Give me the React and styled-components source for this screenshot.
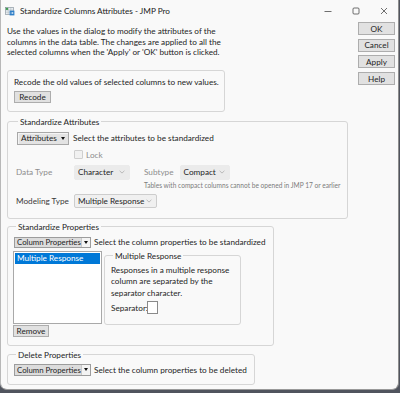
import React from "react";
import styled, { createGlobalStyle } from "styled-components";

const FONT = `Lato, "Noto Sans", "Liberation Sans", sans-serif`;

const GlobalStyle = createGlobalStyle`
  html, body { margin: 0; padding: 0; }
  body {
    width: 400px;
    height: 393px;
    overflow: hidden;
    background: #50545e;
    font-family: ${FONT};
  }
`;

const Window = styled.div`
  width: 399px;
  height: 390px;
  box-sizing: border-box;
  background: #f9f9f9;
  border-left: 1px solid #b8b8b8;
  border-right: 1px solid #8e8e8e;
  border-bottom: 1px solid #9a9a9a;
  border-radius: 0 0 7px 7px;
  display: flex;
  flex-direction: column;
  color: #1e1e1e;
  font-size: 8.2px;
`;

const TitleBar = styled.div`
  height: 21px;
  display: flex;
  align-items: center;
  padding-left: 4px;
`;

const Title = styled.span`
  margin-left: 5px;
  font-size: 8.2px;
  color: #1b1b1b;
`;

const WinControls = styled.div`
  margin-left: auto;
  display: flex;
  align-self: stretch;
`;

const WinControl = styled.div`
  width: 28px;
  display: flex;
  align-items: center;
  justify-content: center;
`;

const Body = styled.div`
  display: flex;
  justify-content: space-between;
  padding: 0 3px 0 6px;
`;

const Main = styled.div`
  display: flex;
  flex-direction: column;
  align-items: flex-start;
  padding-top: 5px;
`;

const Side = styled.div`
  display: flex;
  flex-direction: column;
  gap: 3.7px;
  padding-top: 1px;
`;

const Button = styled.div`
  box-sizing: border-box;
  width: ${(p) => p.$w || 37}px;
  height: ${(p) => p.$h || 13}px;
  background: #e1e1e1;
  border: 1px solid #adadad;
  display: flex;
  align-items: center;
  justify-content: center;
  color: #1e1e1e;
  font-size: 8.2px;
`;

const Intro = styled.p`
  margin: 0;
  line-height: 10.7px;
  white-space: nowrap;
`;

const Box = styled.div`
  box-sizing: border-box;
  width: 218px;
  height: 42px;
  margin-top: 11.5px;
  border: 1px solid #d6d6d6;
  border-radius: 3px;
  padding: 6px 6px 0;
  display: flex;
  flex-direction: column;
  align-items: flex-start;
  gap: 4px;
  line-height: 10px;
  white-space: nowrap;
`;

const Group = styled.fieldset`
  box-sizing: border-box;
  width: ${(p) => p.$w}px;
  margin: ${(p) => p.$mt}px 0 0;
  padding: ${(p) => p.$pad};
  border: 1px solid #d6d6d6;
  border-radius: 3px;
  min-width: 0;
  white-space: nowrap;
`;

const Legend = styled.legend`
  padding: 0 2px;
  margin-left: 2px;
  font-size: 8.2px;
  line-height: 10px;
  color: #1e1e1e;
`;

const AttrGrid = styled.div`
  display: grid;
  grid-template-columns: 58px auto;
  row-gap: 5px;
  align-items: center;
`;

const Wide = styled.div`
  grid-column: 1 / span 2;
  display: flex;
  align-items: center;
  gap: 4px;
  margin-left: 1px;
`;

const Row = styled.div`
  display: flex;
  align-items: ${(p) => p.$align || "center"};
  gap: ${(p) => p.$gap || 0}px;
`;

const MenuButton = styled(Button)`
  gap: 4px;
  background: #e3e3e3;
  border-color: #a8a8a8;
  box-shadow: inset 1px 1px 0 #f4f4f4;
`;

const Caret = styled.span`
  width: 0;
  height: 0;
  border-left: 2.5px solid transparent;
  border-right: 2.5px solid transparent;
  border-top: 3px solid #111;
`;

const FieldLabel = styled.span`
  color: ${(p) => (p.$muted ? "#8d8d8d" : "#3a3a3a")};
  line-height: 10px;
`;

const CheckBox = styled.span`
  box-sizing: border-box;
  width: 9px;
  height: 9px;
  border: 1px solid #cfcfcf;
  background: #f1f1f1;
  border-radius: 1px;
`;

const Combo = styled.div`
  box-sizing: border-box;
  width: ${(p) => p.$w}px;
  height: ${(p) => p.$h || 15}px;
  background: ${(p) => (p.$bordered ? "#f0f0f0" : "#ebebeb")};
  border: 1px solid ${(p) => (p.$bordered ? "#cdcdcd" : "#ebebeb")};
  border-radius: 2px;
  display: flex;
  align-items: center;
  justify-content: space-between;
  padding: 0 4px 0 3px;
  color: #1e1e1e;
`;

const Chevron = () => (
  <svg width="6" height="4" viewBox="0 0 6 4">
    <path d="M0.6 0.8 L3 3.1 L5.4 0.8" fill="none" stroke="#a5a5a5" strokeWidth="0.7" />
  </svg>
);

const SubCol = styled.div`
  display: flex;
  flex-direction: column;
  margin-left: 14px;
  gap: 1px;
`;

const Note = styled.span`
  font-size: 6.6px;
  line-height: 8px;
  color: #7c7c7c;
  white-space: nowrap;
`;

const PropsButton = styled.div`
  box-sizing: border-box;
  width: 77px;
  height: ${(p) => p.$h || 11}px;
  background: #dcdcdc;
  border: 1px solid #9c9c9c;
  display: flex;
  align-items: center;
  padding-left: 2px;
  color: #1e1e1e;
  font-size: 7.8px;
`;

const ArrowBox = styled.span`
  margin-left: auto;
  width: 8px;
  align-self: stretch;
  background: #f3f3f3;
  border-left: 1px solid #c9c9c9;
  display: flex;
  align-items: center;
  justify-content: center;
`;

const ListCol = styled.div`
  display: flex;
  flex-direction: column;
  align-items: flex-start;
  gap: 1px;
  margin-left: -1px;
`;

const ListBox = styled.div`
  box-sizing: border-box;
  width: 89px;
  height: 73px;
  background: #fff;
  border: 1px solid #a9a9a9;
  padding: 1px;
`;

const ListItem = styled.div`
  height: 11px;
  line-height: 11px;
  padding-left: 2px;
  background: ${(p) => (p.$selected ? "#0078d7" : "transparent")};
  color: ${(p) => (p.$selected ? "#fff" : "#1e1e1e")};
`;

const Para = styled.p`
  margin: 0;
  line-height: 11.5px;
  white-space: nowrap;
`;

const SepInput = styled.span`
  box-sizing: border-box;
  width: 11px;
  height: 13px;
  background: #fff;
  border: 1px solid #8a8a8a;
  margin-left: -1px;
`;

const AppIcon = () => (
  <svg width="10" height="10" viewBox="0 0 10 10">
    <rect x="0.5" y="1.5" width="8" height="7" fill="#e9eef2" stroke="#7d8a94" strokeWidth="0.6" />
    <path d="M0.5 4 H8.5 M0.5 6.2 H8.5 M3.2 1.5 V8.5 M5.8 1.5 V8.5" stroke="#9aa6ae" strokeWidth="0.4" />
    <rect x="0.8" y="1.8" width="2.3" height="2.1" fill="#3e9b4f" />
    <path d="M4.6 4.6 L9.4 4.6 L9.4 9.4 L4.6 9.4 Z" fill="#2f7fc8" />
    <path d="M5.6 7 H8.2 M7.2 6 L8.2 7 L7.2 8" fill="none" stroke="#fff" strokeWidth="0.6" />
  </svg>
);

const Minimize = () => (
  <svg width="8" height="8" viewBox="0 0 8 8">
    <path d="M0.5 4.5 H7.5" stroke="#333" strokeWidth="0.7" />
  </svg>
);

const Maximize = () => (
  <svg width="8" height="8" viewBox="0 0 8 8">
    <rect x="1" y="1" width="6" height="6" rx="1" fill="none" stroke="#333" strokeWidth="0.7" />
  </svg>
);

const Close = () => (
  <svg width="8" height="8" viewBox="0 0 8 8">
    <path d="M1 1 L7 7 M7 1 L1 7" stroke="#333" strokeWidth="0.7" />
  </svg>
);

export default function App() {
  return (
    <>
      <GlobalStyle />
      <Window>
        <TitleBar>
          <AppIcon />
          <Title>Standardize Columns Attributes - JMP Pro</Title>
          <WinControls>
            <WinControl><Minimize /></WinControl>
            <WinControl><Maximize /></WinControl>
            <WinControl><Close /></WinControl>
          </WinControls>
        </TitleBar>
        <Body>
          <Main>
            <Intro>
              Use the values in the dialog to modify the attributes of the
              <br />
              columns in the data table. The changes are applied to all the
              <br />
              selected columns when the 'Apply' or 'OK' button is clicked.
            </Intro>

            <Box>
              <span>Recode the old values of selected columns to new values.</span>
              <Button $w={37} $h={12}>Recode</Button>
            </Box>

            <Group $w={341} $mt={5} $pad="5px 8px 10px">
              <Legend>Standardize Attributes</Legend>
              <AttrGrid>
                <Wide>
                  <MenuButton $w={52} $h={13}>
                    Attributes <Caret />
                  </MenuButton>
                  <span>Select the attributes to be standardized</span>
                </Wide>
                <span />
                <Row $gap={3}>
                  <CheckBox />
                  <FieldLabel $muted>Lock</FieldLabel>
                </Row>
                <FieldLabel $muted style={{ alignSelf: "start", marginTop: 2 }}>Data Type</FieldLabel>
                <Row $align="flex-start">
                  <Combo $w={56}>
                    Character <Chevron />
                  </Combo>
                  <SubCol>
                    <Row $gap={6}>
                      <FieldLabel $muted>Subtype</FieldLabel>
                      <Combo $w={50}>
                        Compact <Chevron />
                      </Combo>
                    </Row>
                    <Note>Tables with compact columns cannot be opened in JMP 17 or earlier</Note>
                  </SubCol>
                </Row>
                <FieldLabel>Modeling Type</FieldLabel>
                <Combo $w={83} $h={14} $bordered>
                  Multiple Response <Chevron />
                </Combo>
              </AttrGrid>
            </Group>

            <Group $w={267} $mt={3} $pad="5px 6px 8px">
              <Legend>Standardize Properties</Legend>
              <Row $gap={3}>
                <PropsButton>
                  Column Properties
                  <ArrowBox><Caret /></ArrowBox>
                </PropsButton>
                <span>Select the column properties to be standardized</span>
              </Row>
              <Row $align="flex-start" $gap={2} style={{ marginTop: 3 }}>
                <ListCol>
                  <ListBox>
                    <ListItem $selected>Multiple Response</ListItem>
                  </ListBox>
                  <Button $w={36} $h={12}>Remove</Button>
                </ListCol>
                <Group $w={137} $mt={0} $pad="4px 6px 10px">
                  <Legend>Multiple Response</Legend>
                  <Para>
                    Responses in a multiple response
                    <br />
                    column are separated by the
                    <br />
                    separator character.
                  </Para>
                  <Row style={{ marginTop: 2 }}>
                    <span>Separator:</span>
                    <SepInput />
                  </Row>
                </Group>
              </Row>
            </Group>

            <Group $w={248} $mt={4} $pad="4px 6px 8px">
              <Legend>Delete Properties</Legend>
              <Row $gap={3}>
                <PropsButton $h={12}>
                  Column Properties
                  <ArrowBox><Caret /></ArrowBox>
                </PropsButton>
                <span>Select the column properties to be deleted</span>
              </Row>
            </Group>
          </Main>

          <Side>
            <Button>OK</Button>
            <Button>Cancel</Button>
            <Button>Apply</Button>
            <Button>Help</Button>
          </Side>
        </Body>
      </Window>
    </>
  );
}
